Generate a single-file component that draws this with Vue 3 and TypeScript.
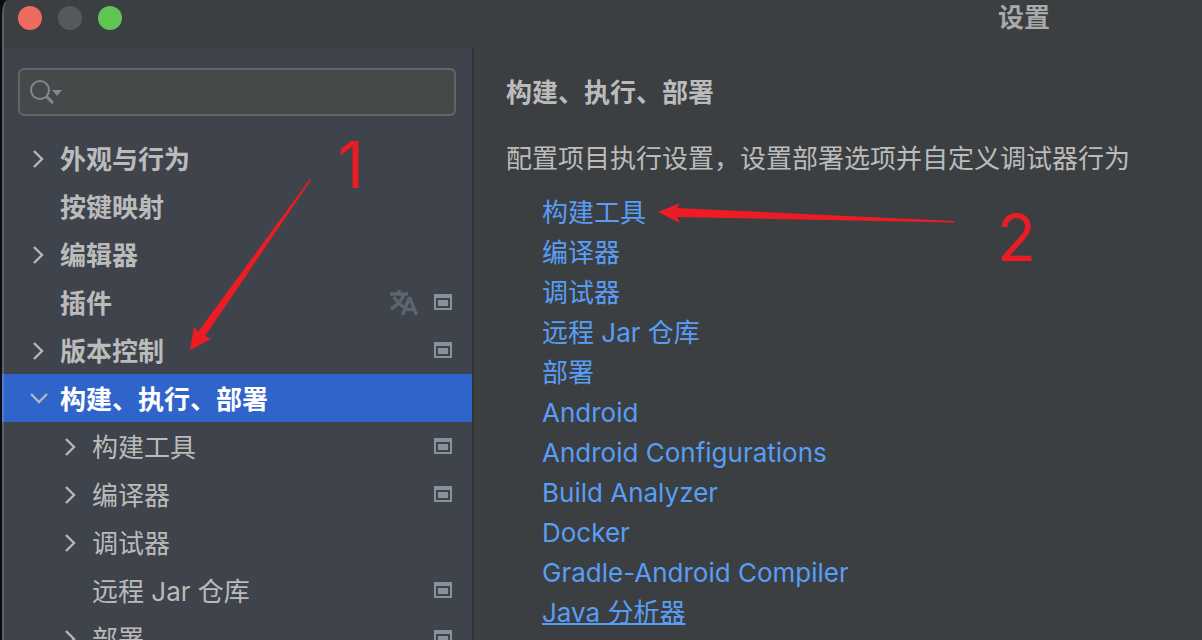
<script setup lang="ts">
import { ref } from 'vue'

interface TreeItem {
  label: string
  level: 0 | 1
  arrow?: 'closed' | 'open'
  project?: boolean
  translate?: boolean
}

const items: TreeItem[] = [
  { label: '外观与行为', level: 0, arrow: 'closed' },
  { label: '按键映射', level: 0 },
  { label: '编辑器', level: 0, arrow: 'closed' },
  { label: '插件', level: 0, project: true, translate: true },
  { label: '版本控制', level: 0, arrow: 'closed', project: true },
  { label: '构建、执行、部署', level: 0, arrow: 'open' },
  { label: '构建工具', level: 1, arrow: 'closed', project: true },
  { label: '编译器', level: 1, arrow: 'closed', project: true },
  { label: '调试器', level: 1, arrow: 'closed' },
  { label: '远程 Jar 仓库', level: 1, project: true },
  { label: '部署', level: 1, arrow: 'closed', project: true },
]

const links: string[] = [
  '构建工具',
  '编译器',
  '调试器',
  '远程 Jar 仓库',
  '部署',
  'Android',
  'Android Configurations',
  'Build Analyzer',
  'Docker',
  'Gradle-Android Compiler',
  'Java 分析器',
]

const selected = ref(5)
const focusedLink = ref(10)
const query = ref('')
</script>

<template>
  <div class="desktop">
    <div class="window">
      <header class="titlebar">
        <div class="lights">
          <button class="light close" type="button" aria-label="关闭"></button>
          <button class="light minimize" type="button" aria-label="最小化"></button>
          <button class="light zoom" type="button" aria-label="缩放"></button>
        </div>
        <h1 class="title">设置</h1>
      </header>

      <div class="body">
        <aside class="sidebar">
          <label class="search">
            <svg class="search-icon" width="34" height="26" viewBox="0 0 34 26" aria-hidden="true">
              <circle cx="10" cy="11" r="9" fill="none" stroke="#7f8b91" stroke-width="2" />
              <path d="M16 17 L23 24" stroke="#7f8b91" stroke-width="3" />
              <path d="M22 11 H32 L27 17 Z" fill="#7f8b91" />
            </svg>
            <input v-model="query" class="search-input" type="text" aria-label="搜索" />
          </label>

          <ul class="tree">
            <li v-for="(item, i) in items" :key="i">
              <button
                type="button"
                class="row"
                :class="{ child: item.level === 1, selected: selected === i }"
                @click="selected = i"
              >
                <span class="arrow">
                  <svg v-if="item.arrow === 'closed'" width="20" height="20" viewBox="0 0 20 20" aria-hidden="true">
                    <path d="M6 3 L14 11 L6 19" fill="none" stroke="#b4b6b8" stroke-width="2.400" />
                  </svg>
                  <svg v-else-if="item.arrow === 'open'" width="20" height="20" viewBox="0 0 20 20" aria-hidden="true">
                    <path d="M3 6 L11 14 L19 6" fill="none" stroke="#b4b6b8" stroke-width="2.400" />
                  </svg>
                </span>
                <span class="label">{{ item.label }}</span>
                <svg v-if="item.translate" class="translate" width="28" height="26" viewBox="0 0 28 26" aria-hidden="true">
                  <g fill="none" stroke="#5c656d" stroke-width="3.400">
                    <path d="M0 5 H18 M9 1 V5 M14 5 Q11 14 1 20 M4 8 Q8 15 14 18" />
                    <path d="M12.500 26 L19 9.500 H20 L26.500 26 M14.500 20.500 H24.500" />
                  </g>
                </svg>
                <svg v-if="item.project" class="project" width="18" height="16" viewBox="0 0 18 16" aria-hidden="true">
                  <path fill="#87939a" fill-rule="evenodd" d="M0 0 H18 V16 H0 Z M2 4 V14 H16 V4 Z M4 6 H14 V12 H4 Z" />
                </svg>
              </button>
            </li>
          </ul>
        </aside>

        <main class="content">
          <h2 class="heading">构建、执行、部署</h2>
          <p class="description">配置项目执行设置，设置部署选项并自定义调试器行为</p>
          <ul class="links">
            <li v-for="(link, i) in links" :key="link">
              <a href="#" :class="{ focused: focusedLink === i }" @click.prevent="focusedLink = i">{{ link }}</a>
            </li>
          </ul>
        </main>
      </div>
    </div>

    <svg class="annotations" width="1100" height="400" viewBox="0 0 1100 400" aria-hidden="true">
      <g fill="#ed1c24">
        <path d="M190 350 L194 327 L198 332 L310 179 L311 180 L205 336 L211 339 Z" />
        <path d="M658 212 L680 203 L677 208 L954 221 L955 222.500 L677 217 L680 223 Z" />
      </g>
    </svg>
    <span class="step step-one">1</span>
    <span class="step step-two">2</span>
  </div>
</template>

<style>
body {
  background: #17181a;
}
</style>

<style scoped>
.desktop {
  position: relative;
  height: 100vh;
  overflow: hidden;
  box-sizing: border-box;
  padding-left: 2px;
  background: #0c0d0e;
  font-family: Inter, "Noto Sans CJK SC", sans-serif;
  font-size: 26px;
  color: #bbbbbb;
}

.window {
  position: relative;
  display: flex;
  flex-direction: column;
  height: 100%;
  overflow: hidden;
  border-top-left-radius: 6px 14px;
  background: #3c3f41;
}

/* Light rim along the window's left edge and corner */
.window::after {
  content: "";
  position: absolute;
  inset: 0;
  border-left: 2px solid rgba(255, 255, 255, 0.16);
  border-top-left-radius: 6px 14px;
  pointer-events: none;
}

.titlebar {
  display: flex;
  flex: none;
  justify-content: space-between;
  height: 48px;
  box-sizing: border-box;
  padding: 0 152px 12px 16px;
}

.lights {
  display: flex;
  align-items: center;
  gap: 16px;
}

.light {
  width: 24px;
  height: 24px;
  padding: 0;
  border: 0;
  border-radius: 50%;
}

.close {
  background: #ed6a5e;
}

.minimize {
  background: #565a5c;
}

.zoom {
  background: #61c554;
}

.title {
  margin: 0;
  font-size: 26px;
  line-height: 36px;
  font-weight: 700;
  color: #a7a9aa;
}

.body {
  display: flex;
  flex: 1;
  min-height: 0;
}

.sidebar {
  flex: none;
  width: 470px;
  border-right: 2px solid #333333;
  background: #3f434c;
  overflow: hidden;
}

.search {
  display: flex;
  align-items: center;
  height: 48px;
  box-sizing: border-box;
  margin: 20px 16px 18px;
  padding: 0 10px;
  border: 2px solid #646464;
  border-radius: 6px;
  background: #45494a;
}

.search-icon {
  flex: none;
}

.search-input {
  flex: 1;
  min-width: 0;
  padding: 0 8px;
  border: 0;
  outline: 0;
  background: transparent;
  color: inherit;
  font: inherit;
}

.tree,
.links {
  margin: 0;
  padding: 0;
  list-style: none;
}

.row {
  display: flex;
  align-items: center;
  width: 100%;
  height: 48px;
  padding: 0 20px 0 26px;
  border: 0;
  background: transparent;
  color: inherit;
  font: inherit;
  font-weight: 700;
  text-align: left;
}

.row.child {
  padding-left: 58px;
  font-weight: 400;
}

.row.selected {
  background: #2f65ca;
  color: #ffffff;
}

.arrow {
  display: flex;
  flex: none;
  width: 32px;
}

.label {
  flex: 1;
  padding-bottom: 2px;
}

.translate {
  margin-right: 16px;
}

.content {
  flex: 1;
  min-width: 0;
  padding: 25px 32px 0;
}

.heading {
  margin: 0;
  font-size: 26px;
  line-height: 40px;
  font-weight: 700;
}

.description {
  margin: 26px 0 14px;
  line-height: 40px;
  white-space: nowrap;
}

.links {
  padding-left: 36px;
}

.links li {
  line-height: 40px;
}

.links a {
  color: #589df6;
  text-decoration: none;
}

.links a.focused {
  text-decoration: underline;
  text-decoration-thickness: 2px;
  text-decoration-skip-ink: none;
}

.annotations {
  position: absolute;
  top: 0;
  left: 0;
  pointer-events: none;
}

.step {
  position: absolute;
  font-size: 64px;
  line-height: 64px;
  font-weight: 400;
  color: #ed1c24;
}

.step-one {
  top: 133px;
  left: 338px;
}

.step-two {
  top: 206px;
  left: 997px;
}
</style>
